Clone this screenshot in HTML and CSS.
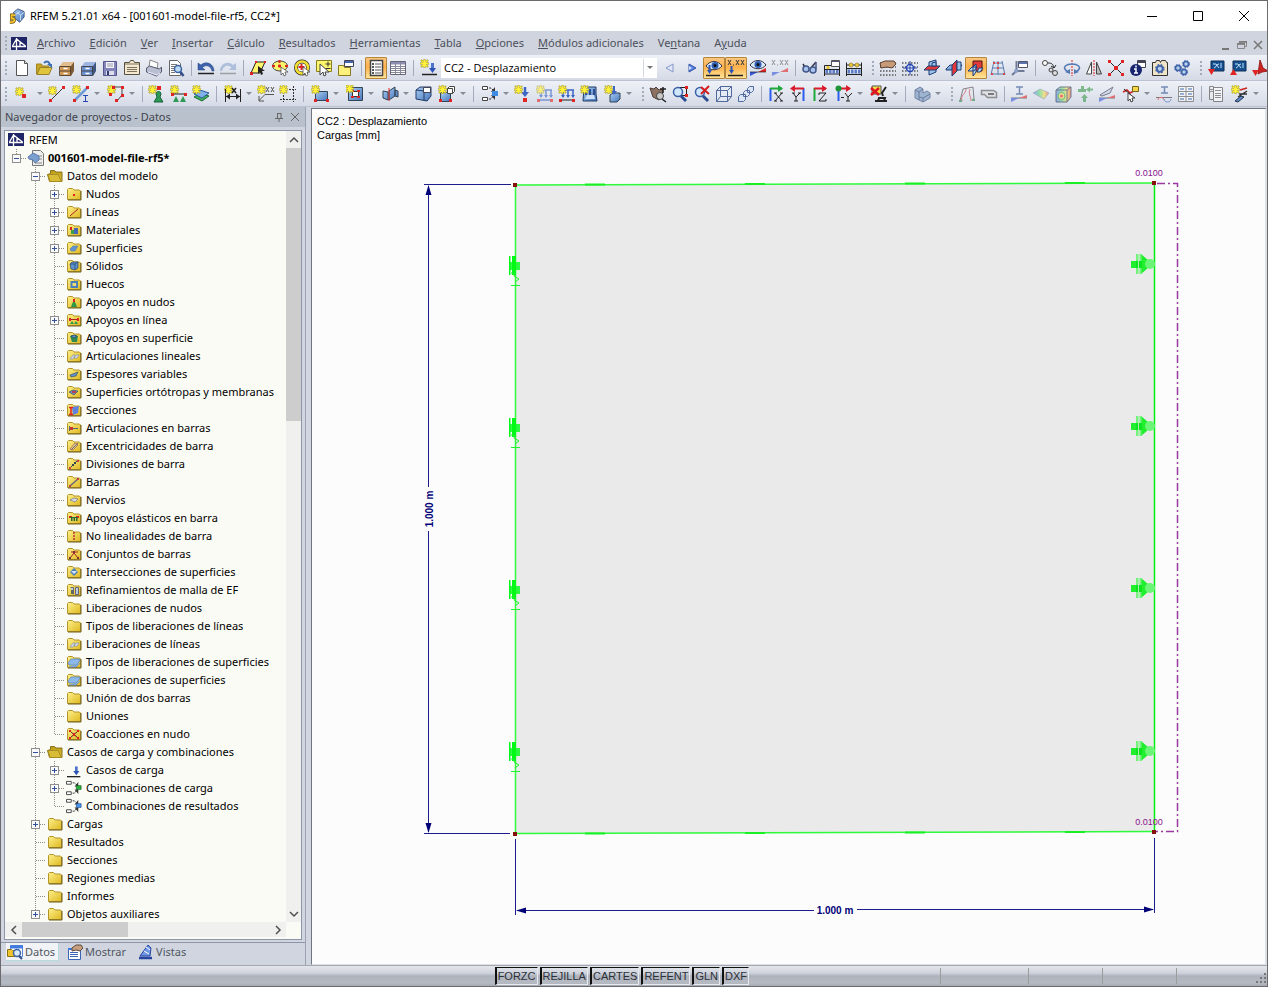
FILE: index.html
```html
<!DOCTYPE html>
<html lang="es">
<head>
<meta charset="utf-8">
<title>RFEM 5.21.01 x64</title>
<link rel="stylesheet" href="styles.css">
</head>
<body>
<svg class="defs" width="0" height="0" aria-hidden="true">
  <defs>
    <linearGradient id="gold" x1="0" y1="0" x2="1" y2="1"><stop offset="0" stop-color="#fdf08a"/><stop offset="1" stop-color="#dfb820"/></linearGradient>
    <linearGradient id="olive" x1="0" y1="0" x2="0" y2="1"><stop offset="0" stop-color="#b89a1c"/><stop offset="1" stop-color="#e2c436"/></linearGradient>
    <linearGradient id="blue" x1="0" y1="0" x2="1" y2="1"><stop offset="0" stop-color="#a9cdf2"/><stop offset="1" stop-color="#4677bd"/></linearGradient>
    <linearGradient id="rainbow" x1="0" y1="0" x2="1" y2="0"><stop offset="0" stop-color="#5a7df0"/><stop offset=".4" stop-color="#5fd87a"/><stop offset=".7" stop-color="#f4e04a"/><stop offset="1" stop-color="#f0533c"/></linearGradient>
    <g id="star"><path d="M4.5 0v9M0 4.5h9M1 1l7 7M8 1l-7 7" stroke="#a89a2c" stroke-width="2" fill="none"/><path d="M4.5 .5v8M.5 4.5h8M1.500 1.500l6 6M7.500 1.500l-6 6" stroke="#fff03a" stroke-width="1.200" fill="none"/></g>
    <g id="logo"><path fill="#1f2466" d="M0 1h16v13H0z"/><path d="M1 10.500h14M5.500 2v12M5.500 3l-4 7M5.500 3l9 7M9 6v4" stroke="#fff" stroke-width="1.300" fill="none"/></g>
    <g id="folder"><path d="M.5 13.500v-10l1-1h4l1.500 1.500h5.500l1 1v8.500z" fill="url(#gold)" stroke="#b3942a"/><path d="M1 14h13V5" fill="none" stroke="#6f5c1a"/></g>
    <g id="open"><path d="M1.500 13.500L-.5 6.500l3-1V2.500h4l1.500 1.500h6v9.500z" fill="url(#olive)" stroke="#8b731a"/><path d="M0 6.500h10l3.500 7H2z" fill="#d9bc35" stroke="#a88d22"/></g>
    <g id="drawers"><path d="M3 7l3-4h11v9l-3 5H3z"/><path d="M3 7l3-4h11l-3 4z" fill="#fff" fill-opacity=".35"/><path d="M14 7l3-4v9l-3 5z" fill="#000" fill-opacity=".4"/><path d="M2.500 7.500h11v9h-11zM3 12h11" stroke="#3c342c" stroke-width=".8" fill="none"/><path d="M6.500 9.500h4M6.500 14.500h4" stroke="#fff" stroke-width="1.500"/></g>
    <g id="plane"><path d="M1 10l4-4h12l-4 5H1z" fill="url(#blue)" stroke="#1d3d74"/></g>
    <g id="glyphgrid"><path d="M1 4h16M1 8h16M1 12h16M1 16h16" stroke="#555" stroke-width="1.500" stroke-dasharray="1.500 1.500" fill="none"/></g>
    <g id="combo"><path d="M1.500 1.500h5v3h-5zM1.500 12.500h5v3h-5z" fill="#fff" stroke="#444"/><path d="M8 3h2l3 3M8 14h2l3-4" stroke="#333" fill="none" stroke-dasharray="2 1"/><path d="M14 2v5h-4zM14 15v-5h-4z" fill="#333"/></g>
    <g id="support"><path d="M4 3a2.500 2.500 0 0 1 5 0L8 6l3 5H2l3-5z" fill="#2f9a55" stroke="#14613a"/></g>
    <g id="load"><path d="M1 16.500h15" stroke="#222" stroke-width="1.500"/><path d="M11.500 5v6" stroke="#4d72cc" stroke-width="3"/><path d="M8 10h7l-3.500 5z" fill="#2d55b8"/></g>
    <g id="gear"><circle cx="4" cy="4" r="2.500" fill="#b7d0ee" stroke="#3d62a8" stroke-width="1.500"/><circle cx="4" cy="4" r="3.500" fill="none" stroke="#3d62a8" stroke-dasharray="1.500 1.300"/></g>
    <g id="bearing-left" fill="#00fa16"><path d="M509 256h1.500v19H509zM512 256h4v19h-4z"/><path d="M510 262h10v8h-10z" opacity=".8"/><path d="M511 273h4l-1 3 5 3-4 3M511 285.500h9" fill="none" stroke="#1ff02c"/></g>
    <g id="bearing-right"><path d="M1131 261h6v7h-6zM1141 254l7 6v8l-7 6z" fill="#22ee30"/><path d="M1136 254h2.500v20h-2.500zM1139.500 254h2v20h-2z" fill="#74f27c"/><circle cx="1150" cy="264" r="5" fill="#6cf576"/><path d="M1136 261h2v7h-2zM1139 261h3v7h-3z" fill="#0ce51c"/></g>
  </defs>
</svg>

<div class="window">
  <header class="titlebar">
    <svg class="ico" viewBox="0 0 18 18"><path d="M5 5l5-4 7 3v6l-5 6-5-4z" fill="url(#blue)" stroke="#3a5078"/><path d="M9 5l4 3v6M13 8l4-3M7 8l5-4" stroke="#dbe7f7" fill="none"/><path d="M7 8H3v4c4-1 4 4 0 4H1" stroke="#6b5210" stroke-width="3.500" fill="none"/><path d="M7 8H3v4c4-1 4 4 0 4H1" stroke="#f3c22a" stroke-width="2" fill="none"/></svg>
    <h1>RFEM 5.21.01 x64 - [001601-model-file-rf5, CC2*]</h1>
    <div class="caption-buttons">
      <button aria-label="Minimizar"><svg viewBox="0 0 12 12"><path d="M1 6.500h10" stroke="#000"/></svg></button>
      <button aria-label="Maximizar"><svg viewBox="0 0 12 12"><path d="M1.500 1.500h9v9h-9z" fill="none" stroke="#000"/></svg></button>
      <button aria-label="Cerrar"><svg viewBox="0 0 12 12"><path d="M1 1l10 10M11 1L1 11" stroke="#000"/></svg></button>
    </div>
  </header>

  <nav class="menubar" aria-label="Menú principal">
    <span class="grip"></span>
    <svg class="brand" viewBox="0 0 16 15"><use href="#logo"/></svg>
    <button><u>A</u>rchivo</button><button><u>E</u>dición</button><button><u>V</u>er</button><button><u>I</u>nsertar</button><button><u>C</u>álculo</button><button><u>R</u>esultados</button><button><u>H</u>erramientas</button><button><u>T</u>abla</button><button><u>O</u>pciones</button><button><u>M</u>ódulos adicionales</button><button>Ve<u>n</u>tana</button><button>A<u>y</u>uda</button>
    <div class="mdi-buttons">
      <button aria-label="Minimizar documento"><svg viewBox="0 0 12 12"><path d="M2 10h7" stroke="#777" stroke-width="2"/></svg></button>
      <button aria-label="Restaurar documento"><svg viewBox="0 0 12 12"><path d="M3.500 4V2.500h7v5H9M1.500 4.500h7v5h-7z" fill="none" stroke="#888"/><path d="M1 5h8M3 3h8" stroke="#777" stroke-width="1.500"/></svg></button>
      <button aria-label="Cerrar documento"><svg viewBox="0 0 12 12"><path d="M2 2l8 8M10 2l-8 8" stroke="#777" stroke-width="1.500"/></svg></button>
    </div>
  </nav>

  <div class="toolbar" role="toolbar" aria-label="Estándar">
    <span class="grip"></span>
    <button class="tool" aria-label="Nuevo"><svg viewBox="0 0 18 18"><path d="M3.500 1.500h8l3 3v12h-11z" fill="#fff" stroke="#555"/><path d="M11.500 1.500v3h3" fill="#ddd" stroke="#555"/></svg></button>
    <button class="tool" aria-label="Abrir"><svg viewBox="0 0 18 18"><path d="M1.500 15V5h5l1 2h6v8z" fill="#c9a526" stroke="#a08622"/><path d="M2 15.500l3-7h12l-3 7z" fill="#e0c43e" stroke="#96802a"/><path d="M9 4c3-3 6-1 6 3" stroke="#3c6eb4" stroke-width="2" fill="none"/><path d="M12 5h5v4z" fill="#3c6eb4"/></svg></button>
    <button class="tool" aria-label="Archivador"><svg viewBox="0 0 18 18"><use href="#drawers" fill="#d39a55"/></svg></button>
    <button class="tool" aria-label="Proyectos"><svg viewBox="0 0 18 18"><use href="#drawers" fill="#6a90d2"/></svg></button>
    <button class="tool" aria-label="Guardar"><svg viewBox="0 0 18 18"><path d="M2.500 2.500h13v14h-13z" fill="#8284ba" stroke="#55578c"/><path d="M5 3h8v6H5z" fill="#f4f4fa"/><path d="M6 5h6M6 7h6" stroke="#99a"/><path d="M5 12h8v4H5z" fill="#dde"/><path d="M6 12h2v4H6z" fill="#333a70"/></svg></button>
    <button class="tool" aria-label="Portapapeles"><svg viewBox="0 0 18 18"><path d="M1.500 3.500h5l1-2h3l1 2h5v12h-15z" fill="#f3e8cf" stroke="#5a5140"/><path d="M2 5h14M4 8.500h10M4 10.500h10M4 12.500h10" stroke="#7c715b"/></svg></button>
    <button class="tool" aria-label="Imprimir"><svg viewBox="0 0 18 18"><path d="M4 8L5 1l8 3-1 6z" fill="#fff" stroke="#888"/><path d="M1.500 9l3-2 10 3 2-2v5l-5 4-10-4z" fill="#b9bfd0" stroke="#545a70"/><path d="M3 13l9 3 3-2" stroke="#eef" fill="none"/></svg></button>
    <button class="tool" aria-label="Vista preliminar"><svg viewBox="0 0 18 18"><path d="M2.500 1.500h8l3 3v12h-11z" fill="#fff" stroke="#666"/><path d="M4 5.500h6M4 7.500h4M4 9.500h3M4 11.500h3M4 13.500h4" stroke="#777"/><circle cx="11" cy="10" r="3.500" fill="#bcdcf6" stroke="#3c62a0" stroke-width="1.500"/><path d="M13.500 13l3 4" stroke="#334f88" stroke-width="2.500"/></svg></button>
    <span class="sep"></span>
    <button class="tool" aria-label="Deshacer"><svg viewBox="0 0 18 18"><path d="M1 4v7h7L5.500 8.500C9 5 14 7 15 12h2C17 5 9 1 4 6z" fill="#3d63ae" stroke="#27437e" stroke-width=".5"/><path d="M1 14.500h16" stroke="#222" stroke-width="1.500"/></svg></button>
    <button class="tool dim" aria-label="Rehacer"><svg viewBox="0 0 18 18"><path d="M17 4v7h-7l2.500-2.500C9 5 4 7 3 12H1C1 5 9 1 14 6z" fill="#8ba4cf"/><path d="M1 14.500h16" stroke="#777" stroke-width="1.500"/></svg></button>
    <span class="sep"></span>
    <button class="tool" aria-label="Selección por paralelogramo"><svg viewBox="0 0 18 18"><path d="M2 14L7 3h9l-5 11z" fill="#fdf56b" stroke="#222"/><path d="M1 13h3v3H1zM6 2h2v2H6zM15 2h2v2h-2z" fill="#d22"/><path d="M9 7v8l2-2 1 3 2-1-1-3h3z" fill="#222"/></svg></button>
    <button class="tool" aria-label="Selección por elipse"><svg viewBox="0 0 18 18"><ellipse cx="9" cy="7" rx="7.500" ry="5" fill="#fdf56b" stroke="#444"/><path d="M8.500 1v3M1 7h3M7 7h3M8.500 5.500v3M14 7h3" stroke="#d22" stroke-width="2"/><path d="M10 8v8l2-2 1 3 2-1-1-3h3z" fill="#fff" stroke="#444" stroke-width=".7"/></svg></button>
    <button class="tool" aria-label="Selección circular"><svg viewBox="0 0 18 18"><circle cx="9" cy="8.500" r="6" fill="#fff" stroke="#333" stroke-width="4"/><circle cx="9" cy="8.500" r="6" fill="none" stroke="#f5e030" stroke-width="2.500"/><path d="M8.500 5v6M5.500 8h6" stroke="#d22" stroke-width="2"/><path d="M10 8v8l2-2 1 3 2-1-1-3h3z" fill="#fff" stroke="#444" stroke-width=".7"/></svg></button>
    <button class="tool" aria-label="Selección aditiva"><svg viewBox="0 0 18 18"><path d="M1.500 1.500h15v11h-15z" fill="#fdf56b" stroke="#8a8020"/><path d="M10.500 5h5M13 2.500v5M10.500 9.500h5" stroke="#333"/><path d="M5 5v11l3-3 1 4 2-1-1-3h4z" fill="#fff" stroke="#444"/></svg></button>
    <button class="tool" aria-label="Nueva selección"><svg viewBox="0 0 18 18"><path d="M1.500 6.500h5l1 2h6v8h-12z" fill="#fdf07b" stroke="#8a7a20"/><path d="M7.500 1.500h9v6h-9z" fill="#fff" stroke="#445"/><path d="M8 3h8" stroke="#4668b0" stroke-width="2"/></svg></button>
    <span class="sep"></span>
    <button class="tool on" aria-label="Navegador" aria-pressed="true"><svg viewBox="0 0 18 18"><path d="M3.500 1.500h12v15h-12z" fill="#fff" stroke="#444" stroke-width="1.500"/><path d="M5 5h2M5 8h2M5 11h2M5 14h2" stroke="#222" stroke-width="1.500"/><path d="M8 5h6M8 8h6M8 11h6M8 14h6" stroke="#555"/></svg></button>
    <button class="tool" aria-label="Tablas"><svg viewBox="0 0 18 18"><path d="M1.500 2.500h15v13h-15z" fill="#fff" stroke="#667"/><path d="M2 3h14v2.500H2z" fill="#8e90b8"/><path d="M2 7.500h14M2 9.500h14M2 11.500h14M2 13.500h14M6.500 3v12M11.500 3v12" stroke="#889"/></svg></button>
    <span class="sep"></span>
    <button class="tool" aria-label="Nuevo caso de carga"><svg viewBox="0 0 18 18"><use href="#star" x="1"/><use href="#load" x="2" y="-1"/></svg></button>
    <div class="combo"><select aria-label="Caso de carga"><option>CC2 - Desplazamiento</option></select><svg viewBox="0 0 14 18"><path d="M.5 0v18" stroke="#d4d8e0"/><path d="M4 7h6l-3 3z" fill="#777"/></svg></div>
    <button class="tool" aria-label="Anterior"><svg viewBox="0 0 18 18"><path d="M12 5v8L5 9z" fill="#dfe6f8" stroke="#8798c8"/></svg></button>
    <button class="tool" aria-label="Siguiente"><svg viewBox="0 0 18 18"><path d="M6 5v8l7-4z" fill="#5a82e0" stroke="#3355a8"/><path d="M6 7v4l3-2z" fill="#cfe0fb"/></svg></button>
    <button class="tool on" aria-label="Mostrar cargas"><svg viewBox="0 0 18 18"><path d="M1 16.500h14" stroke="#222" stroke-width="1.500"/><path d="M1 7c4-6 12-6 16 0-4 5-12 5-16 0z" fill="#dce9f8" stroke="#334"/><circle cx="10" cy="6.500" r="3.500" fill="#2f5fb4"/><circle cx="10" cy="6.500" r="1.500" fill="#111"/><path d="M4.500 6v6" stroke="#2d55b8" stroke-width="2"/><path d="M2 11h5l-2.500 4z" fill="#2d55b8"/></svg></button>
    <button class="tool on" aria-label="Mostrar valores de carga"><svg viewBox="0 0 18 18"><path d="M1 16.500h15" stroke="#222" stroke-width="1.500"/><path d="M1 1l3 5M4 1L1 6M9 1l3 5M12 1L9 6M14 1l3 5M17 1l-3 5M6 6h1" stroke="#333"/><path d="M4.500 7v5" stroke="#2d55b8" stroke-width="2"/><path d="M2 11h5l-2.500 4z" fill="#2d55b8"/></svg></button>
    <button class="tool" aria-label="Mostrar resultados"><svg viewBox="0 0 18 18"><path d="M1 6c4-6 12-6 16 0-4 5-12 5-16 0z" fill="#dce9f8" stroke="#334"/><circle cx="9" cy="5.500" r="3.500" fill="#2f5fb4"/><circle cx="9" cy="5.500" r="1.500" fill="#111"/><path d="M1 17l8-4H1z" fill="#3858d8"/><path d="M9 13l8-4v4z" fill="#e02424"/><path d="M1 13h16" stroke="#222" stroke-width=".7"/></svg></button>
    <button class="tool dim" aria-label="Mostrar valores de resultados"><svg viewBox="0 0 18 18"><path d="M1 1l3 5M4 1L1 6M9 1l3 5M12 1L9 6M14 1l3 5M17 1l-3 5M6 6h1" stroke="#555"/><path d="M1 17l8-4H1z" fill="#3858d8"/><path d="M9 13l8-4v4z" fill="#e02424"/></svg></button>
    <span class="sep"></span>
    <button class="tool" aria-label="Filtro visual"><svg viewBox="0 0 18 18"><path d="M2 5l3 5M9 10l6-7" stroke="#334" stroke-width="1.500"/><circle cx="5" cy="10" r="3" fill="#a8c4ee" stroke="#44588a" stroke-width="1.500"/><circle cx="12" cy="11" r="3" fill="#a8c4ee" stroke="#44588a" stroke-width="1.500"/><path d="M15 3v7" stroke="#44588a" stroke-width="1.500"/></svg></button>
    <button class="tool" aria-label="Parámetros de cálculo"><svg viewBox="0 0 18 18"><path d="M1.500 17V6.500h15V17M1 10.500h16M1 15h16" stroke="#222" fill="none"/><circle cx="5" cy="8.500" r="1.800" fill="#e8c83c"/><path d="M2.500 12.800h13" stroke="#5b7cc8" stroke-width="3.500" stroke-dasharray="2.500 1"/><path d="M8.500 1.500h8v6h-8z" fill="#fff" stroke="#555"/><path d="M9 2.500h7" stroke="#557"/></svg></button>
    <button class="tool" aria-label="Calcular"><svg viewBox="0 0 18 18"><path d="M1.500 17V3.500M16.500 3.500V17M1 9.500h16M1 6h16M1 15.500h16" stroke="#222" fill="none"/><circle cx="6" cy="6" r="2" fill="#e8c83c" stroke="#86701c" stroke-width=".6"/><circle cx="12" cy="6" r="2" fill="#e8c83c" stroke="#86701c" stroke-width=".6"/><path d="M2.500 12.500h13" stroke="#5b7cc8" stroke-width="4" stroke-dasharray="2.500 1"/></svg></button>
    <span class="grip"></span>
    <button class="tool" aria-label="Rejilla de trabajo"><svg viewBox="0 0 18 18"><use href="#glyphgrid"/><path d="M1 4l5-2h9l2 3-4 4-5-1-6 1z" fill="#c79a78" stroke="#5b4030"/></svg></button>
    <button class="tool" aria-label="Origen de rejilla"><svg viewBox="0 0 18 18"><use href="#glyphgrid"/><circle cx="9" cy="9" r="3.500" fill="#e8eefb" stroke="#2547b0" stroke-width="1.500"/><path d="M9 2v14M2 9h14" stroke="#2547b0"/></svg></button>
    <button class="tool" aria-label="Plano XY"><svg viewBox="0 0 18 18"><path d="M6 3l7-2v12l-7 3z" fill="#9cc4ea" stroke="#1d3d74"/><path d="M1 11l4-4h12l-4 4z" fill="#e23a3a" stroke="#1d3d74"/><path d="M9 4l4-1v4H9z" fill="#9cc4ea" stroke="#1d3d74"/></svg></button>
    <button class="tool" aria-label="Plano YZ"><svg viewBox="0 0 18 18"><use href="#plane"/><path d="M7 6l5-5v11l-5 5z" fill="#e23a3a" stroke="#1d3d74"/><path d="M12 3h4v8h-4z" fill="#9cc4ea" stroke="#1d3d74"/></svg></button>
    <button class="tool on" aria-label="Plano XZ"><svg viewBox="0 0 18 18"><path d="M6 2h9v10H6z" fill="#e23a3a" stroke="#4a1414"/><path d="M1 12l4-4h5l-3 4zM6 8l3-3v8l-3 4zM12 9h4l-3 4h-3z" stroke="#1d3d74" fill="#bcd9f4"/></svg></button>
    <button class="tool" aria-label="Ejes de trabajo"><svg viewBox="0 0 18 18"><path d="M5 2L2 16M9 2v14M13 2l3 14M4 4h10M3 9h12M2 15h14" stroke="#5a7fae" fill="none"/><path d="M4 3h2v2H4zM8 8h2v2H8zM14 14h2v2h-2zM8 3h2v2H8zM2 14h2v2H2z" fill="#d8484f"/></svg></button>
    <button class="tool" aria-label="Sistema de coordenadas"><svg viewBox="0 0 18 18"><path d="M5.500 2v10h8M5.500 12L1 16" stroke="#6d7a98" stroke-width="2" fill="none"/><path d="M7.500 2.500h9v6h-9z" fill="#fff" stroke="#556"/><path d="M8 4h8" stroke="#5b74b0" stroke-width="2"/><circle cx="5" cy="12" r="2" fill="#8da2c8"/></svg></button>
    <span class="sep"></span>
    <button class="tool" aria-label="Mover o copiar"><svg viewBox="0 0 18 18"><circle cx="4" cy="4" r="2.500" fill="#fff" stroke="#444"/><circle cx="14" cy="14" r="2.500" fill="#ddd" stroke="#444"/><circle cx="10" cy="11" r="2" fill="#ddd" stroke="#444"/><path d="M7 4c4 0 5 1 6 5M13 9l-3-2M13 9l2-3" stroke="#222" fill="none"/></svg></button>
    <button class="tool" aria-label="Girar"><svg viewBox="0 0 18 18"><path d="M9 1v16" stroke="#d22" stroke-dasharray="2 1"/><path d="M4 12c-6-4 0-7 5-7s11 3 5 7" stroke="#5478b4" stroke-width="1.500" fill="none"/><path d="M2 13l5-3v5zM16 13l-5-3v5z" fill="#5478b4"/></svg></button>
    <button class="tool" aria-label="Simetría"><svg viewBox="0 0 18 18"><path d="M6.500 3v12h-5z" fill="#fff" stroke="#444"/><path d="M11.500 3v12h5z" fill="#bbb" stroke="#444"/><path d="M9 1v16" stroke="#d22" stroke-dasharray="2 1"/></svg></button>
    <button class="tool" aria-label="Dividir"><svg viewBox="0 0 18 18"><path d="M2 2l14 14M16 2L2 16" stroke="#222"/><path d="M1 1h3v3H1zM14 1h3v3h-3zM1 14h3v3H1zM14 14h3v3h-3zM7 7h4v4H7z" fill="#e02424"/></svg></button>
    <button class="tool" aria-label="Información"><svg viewBox="0 0 18 18"><path d="M8.500 1.500h8v7h-8z" fill="#fff" stroke="#445"/><path d="M9 3h7" stroke="#445" stroke-width="2"/><circle cx="7" cy="11" r="6" fill="#17256f"/><path d="M7 6.500v2M5 10h2v4M5 14h4" stroke="#fff" stroke-width="1.500" fill="none"/></svg></button>
    <button class="tool" aria-label="Opciones de visualización"><svg viewBox="0 0 18 18"><path d="M1.500 3.500h3l1-2h3l1 2 1-2h4l1 2h1v13h-15z" fill="#efe3c8" stroke="#333"/><g transform="translate(4 5) scale(1.200)"><use href="#gear"/></g></svg></button>
    <button class="tool" aria-label="Configuración"><svg viewBox="0 0 18 18"><use href="#gear" x="1" y="5"/><use href="#gear" x="9" y="1"/><use href="#gear" x="7" y="9"/></svg></button>
    <span class="grip"></span>
    <button class="tool" aria-label="Importar"><svg viewBox="0 0 18 18"><path d="M4 2h13v10H4z" fill="#17508f" stroke="#0d2c56"/><path d="M6 5h3l3 4M12 5c-3 0-3 4-5 4M14 4v5" stroke="#bfe0fa" fill="none"/><path d="M1 10h7l-3.500 6z" fill="#e02424"/></svg></button>
    <button class="tool" aria-label="Exportar"><svg viewBox="0 0 18 18"><path d="M4 2h13v10H4z" fill="#17508f" stroke="#0d2c56"/><path d="M6 5h3l3 4M12 5c-3 0-3 4-5 4M14 4v5" stroke="#bfe0fa" fill="none"/><path d="M1 16h7l-3.500-6z" fill="#e02424"/></svg></button>
    <button class="tool" aria-label="PDF"><svg viewBox="0 0 18 18"><path d="M9 1l3 8 5 3-6 1-4 2z" fill="#c22" stroke="#922"/><path d="M1 11h7l-3.500 6z" fill="#e02424"/></svg></button>
  </div>

  <div class="toolbar" role="toolbar" aria-label="Insertar">
    <span class="grip"></span>
    <div class="split"><button aria-label="Nuevo nudo"><svg viewBox="0 0 18 18"><use href="#star" y="2"/><path d="M7 9h4v4H7z" fill="#e02424"/></svg></button><button class="more" aria-label="Más nudos"></button></div>
    <button class="tool" aria-label="Nueva línea"><svg viewBox="0 0 18 18"><use href="#star" y="1"/><path d="M3 15L15 3" stroke="#333"/><path d="M1 14h3v3H1zM14 1h3v3h-3z" fill="#e02424"/></svg></button>
    <div class="split"><button aria-label="Nueva barra"><svg viewBox="0 0 18 18"><use href="#star"/><path d="M3 15L15 3" stroke="#6f9ad8" stroke-width="2.500"/><path d="M1 14h3v3H1zM14 1h3v3h-3z" fill="#e02424"/><path d="M11 10.500h5M11 16.500h5M13.500 10v6" stroke="#2547b0"/></svg></button><button class="more" aria-label="Más barras"></button></div>
    <div class="split"><button aria-label="Nueva polilínea"><svg viewBox="0 0 18 18"><use href="#star"/><path d="M6 2h9v8l-5 6" stroke="#444" fill="none"/><path d="M5 1h3v3H5zM14 1h3v3h-3zM14 9h3v3h-3zM8 14h3v3H8zM2 8h3v3H2z" fill="#e02424"/></svg></button><button class="more" aria-label="Más polilíneas"></button></div>
    <span class="sep"></span>
    <button class="tool" aria-label="Apoyo en nudo"><svg viewBox="0 0 18 18"><use href="#support" x="4" y="6"/><use href="#star"/><path d="M9 1h4v4H9z" fill="#e02424"/></svg></button>
    <button class="tool" aria-label="Apoyo en línea"><svg viewBox="0 0 18 18"><use href="#star"/><path d="M3 9h13" stroke="#222"/><path d="M1 8h3v3H1zM14 8h3v3h-3z" fill="#e02424"/><path d="M3 17l3-6 3 6zM10 17l3-6 3 6z" fill="#2f9a55"/></svg></button>
    <button class="tool" aria-label="Apoyo en superficie"><svg viewBox="0 0 18 18"><path d="M2 12l6-4 9 3-7 5z" fill="#3fae5c" stroke="#1b6e37"/><path d="M2 9l6-4 9 3-7 5z" fill="#7fb2ea" stroke="#2d5a9c"/><use href="#star"/></svg></button>
    <span class="sep"></span>
    <div class="split"><button aria-label="Acotación"><svg viewBox="0 0 18 18"><use href="#star"/><path d="M1.500 4v13M16.500 4v13M2 11.500h14" stroke="#222"/><path d="M2 11.500l4-3v6zM16 11.500l-4-3v6z" fill="#222"/><path d="M8 3l4 5M12 3L8 8" stroke="#222" stroke-width="1.500"/></svg></button><button class="more" aria-label="Más acotaciones"></button></div>
    <button class="tool" aria-label="Comentario"><svg viewBox="0 0 18 18"><use href="#star"/><path d="M9 2l3 5M12 2L9 7M14 2l3 5M17 2l-3 5M17 9.500H8l-6 6M2 11v5h5" stroke="#555" fill="none"/></svg></button>
    <button class="tool" aria-label="Línea auxiliar"><svg viewBox="0 0 18 18"><path d="M4.500 1v16M14.500 1v16M1 4.500h16M1 14.500h16" stroke="#333" stroke-dasharray="2 1"/><use href="#star"/></svg></button>
    <span class="sep"></span>
    <div class="split"><button aria-label="Nueva superficie"><svg viewBox="0 0 18 18"><path d="M4.500 6.500h12v9h-12z" fill="url(#blue)" stroke="#345"/><use href="#star"/><path d="M3 14h3v3H3zM15 14h3v3h-3z" fill="#e02424"/></svg></button><button class="more" aria-label="Más superficies"></button></div>
    <div class="split"><button aria-label="Abertura"><svg viewBox="0 0 18 18"><path d="M2.500 2.500h14v13h-14z" fill="url(#blue)" stroke="#345"/><path d="M6.500 6.500h6v5h-6z" fill="#fff" stroke="#333"/><path d="M5 5h3v2H5zM11 5h3v2h-3zM5 11h3v2H5zM11 11h3v2h-3z" fill="#e02424"/><use href="#star" x="-1" y="-1"/></svg></button><button class="more" aria-label="Más aberturas"></button></div>
    <div class="split"><button aria-label="Intersección"><svg viewBox="0 0 18 18"><path d="M2 6l5 1v8l-5-2zM8 6l6-4v9l-6 4zM14 5l3 1v6l-3-1z" fill="url(#blue)" stroke="#345"/><path d="M8 3v13" stroke="#e02424"/></svg></button><button class="more" aria-label="Más intersecciones"></button></div>
    <button class="tool" aria-label="Nuevo sólido"><svg viewBox="0 0 18 18"><path d="M2 5l4-3h11v9l-4 5-11-2z" fill="url(#blue)" stroke="#223a66"/><path d="M2 5l8 1 7-4M10 6v9" stroke="#223a66" fill="none"/><path d="M9.500 2.500h7v5h-7z" fill="#fff" stroke="#445"/></svg></button>
    <div class="split"><button aria-label="Extruir"><svg viewBox="0 0 18 18"><path d="M2.500 7.500h10v9h-10z" fill="url(#blue)" stroke="#345"/><path d="M9.500 3.500l2-2h5v5l-2 2M9.500 3.500h5v5h-5z" fill="#fff" stroke="#444"/><use href="#star"/><path d="M1 14h3v3H1zM11 14h3v3h-3z" fill="#e02424"/></svg></button><button class="more" aria-label="Más extrusiones"></button></div>
    <span class="sep"></span>
    <div class="split"><button aria-label="Combinación"><svg viewBox="0 0 18 18"><use href="#combo"/><path d="M11 6h6v5h-6z" fill="#3f8ce4"/></svg></button><button class="more" aria-label="Más combinaciones"></button></div>
    <button class="tool" aria-label="Carga en nudo"><svg viewBox="0 0 18 18"><path d="M11 2v6" stroke="#3c66c4" stroke-width="2.500"/><path d="M7 7h8l-4 5z" fill="#3c66c4"/><use href="#star"/><path d="M9 13h4v4H9z" fill="#e02424"/></svg></button>
    <button class="tool dim" aria-label="Carga en barra"><svg viewBox="0 0 18 18"><path d="M3 5h13M5 5v7M10 5v7M15 5v7M2 15h14" stroke="#3c66c4" stroke-width="1.500"/><path d="M3 10h4l-2 3zM8 10h4l-2 3zM13 10h4l-2 3z" fill="#3c66c4"/><use href="#star"/><path d="M1 14h3v3H1zM14 14h3v3h-3z" fill="#e02424"/></svg></button>
    <button class="tool" aria-label="Carga en línea"><svg viewBox="0 0 18 18"><path d="M3 5h13M5 5v7M10 5v7M15 5v7" stroke="#3c66c4" stroke-width="1.500"/><path d="M3 10h4l-2 3zM8 10h4l-2 3zM13 10h4l-2 3z" fill="#3c66c4"/><path d="M2 15h14" stroke="#222"/><use href="#star"/><path d="M1 14h3v3H1zM14 14h3v3h-3z" fill="#e02424"/></svg></button>
    <button class="tool" aria-label="Carga en superficie"><svg viewBox="0 0 18 18"><path d="M4 2h12v7l1 7H3z" fill="url(#blue)" stroke="#223a66"/><path d="M6 4v6M10 4v6M14 4v6" stroke="#17337a" stroke-width="1.500"/><path d="M5 14l2-4h7l1 4z" fill="#cfe2f8"/><use href="#star"/></svg></button>
    <div class="split"><button aria-label="Carga en sólido"><svg viewBox="0 0 18 18"><path d="M6 10l3-2h7v6l-3 3H6z" fill="url(#blue)" stroke="#345"/><path d="M10 1v5" stroke="#3c66c4" stroke-width="2"/><path d="M7 6h6l-3 4z" fill="#3c66c4"/><use href="#star"/></svg></button><button class="more" aria-label="Más cargas"></button></div>
    <span class="grip"></span>
    <button class="tool" aria-label="Mover vista"><svg viewBox="0 0 18 18"><path d="M1 3l4 1 2-2 3 3 4-1-1 7-3 4-6-3z" fill="#8b7262" stroke="#4c3f38"/><circle cx="11" cy="11" r="3.500" fill="#c9c9c9" stroke="#444"/><path d="M14 2v6M11 4h6M13 14l4 3" stroke="#222" stroke-width="1.500"/></svg></button>
    <button class="tool" aria-label="Ampliar ventana"><svg viewBox="0 0 18 18"><path d="M6.500 2.500h9v8h-9z" fill="none" stroke="#222"/><circle cx="7" cy="7" r="4.500" fill="#cfe6fb" stroke="#3a5ea4" stroke-width="1.500"/><path d="M10 11l5 5" stroke="#2b4a90" stroke-width="3"/><path d="M14 1h3v3h-3zM14 9h3v3h-3z" fill="#e02424"/></svg></button>
    <button class="tool" aria-label="Mostrar todo"><svg viewBox="0 0 18 18"><circle cx="7" cy="7" r="4.500" fill="#cfe6fb" stroke="#3a5ea4" stroke-width="1.500"/><path d="M10 11l5 5" stroke="#2b4a90" stroke-width="3"/><path d="M8 2l8 7M16 1L8 9" stroke="#d81c1c" stroke-width="2"/></svg></button>
    <button class="tool" aria-label="Isometría"><svg viewBox="0 0 18 18"><path d="M1.500 5.500l4-4h11v10l-4 5h-11zM1.500 5.500h11l4-4M12.500 5.500v11M5.500 1.500v10l-4 5M5.500 11.500h11" fill="#e5eefa" fill-opacity=".5" stroke="#51699c"/></svg></button>
    <button class="tool" aria-label="Vista transparente"><svg viewBox="0 0 18 18"><path d="M10.500 3.500l2-2h4v4l-2 2h-4zM6.500 7.500l2-2h4v4l-2 2h-4zM1.500 11.500l2-2h5v5l-2 2h-5z" fill="#dce5f5" stroke="#51699c"/></svg></button>
    <span class="sep"></span>
    <button class="tool" aria-label="Vista X"><svg viewBox="0 0 18 18"><path d="M3.500 3v13" stroke="#2a5cf0" stroke-width="2"/><path d="M3 3.500h12" stroke="#1fa83c" stroke-width="2"/><path d="M11 0l5 3.500L11 7z" fill="#1fa83c"/><path d="M8 8l7 8M15 8l-7 8M7 8h3M13 8h3M7 16h3M13 16h3" stroke="#222"/></svg></button>
    <button class="tool" aria-label="Vista Y"><svg viewBox="0 0 18 18"><path d="M14.500 3v13" stroke="#2a5cf0" stroke-width="2"/><path d="M3 3.500h12" stroke="#d81c2c" stroke-width="2"/><path d="M6 0L1 3.500 6 7z" fill="#d81c2c"/><path d="M4 8l3 4 4-4M7 12v4M5 16h4M3 8h3M9 8h3" stroke="#222" fill="none"/></svg></button>
    <button class="tool" aria-label="Vista Z"><svg viewBox="0 0 18 18"><path d="M3.500 3v13" stroke="#1fa83c" stroke-width="2"/><path d="M3 3.500h12" stroke="#d81c2c" stroke-width="2"/><path d="M11 0l5 3.500L11 7z" fill="#d81c2c"/><path d="M8 10V8h7l-7 8h7v-2" stroke="#222" fill="none"/></svg></button>
    <div class="split"><button aria-label="Vista -Y"><svg viewBox="0 0 18 18"><path d="M3.500 3v13" stroke="#2a5cf0" stroke-width="2"/><path d="M3 3.500h12" stroke="#d81c2c" stroke-width="2"/><path d="M11 0l5 3.500L11 7z" fill="#d81c2c"/><circle cx="3.500" cy="3.500" r="3" fill="#1f9438"/><path d="M6 12.500h3M10 8l3 4 4-4M13 12v4M11 16h4" stroke="#222" fill="none"/></svg></button><button class="more" aria-label="Más vistas"></button></div>
    <div class="split"><button aria-label="Borrar visibilidad"><svg viewBox="0 0 18 18"><path d="M2 1h9v8H2z" fill="#f2e24a" stroke="#555"/><path d="M16 2l-4 6 1 3M5 16h12M9 13h6l-1 3H8z" stroke="#222" stroke-width="2" fill="none"/><path d="M1 3l8 7M9 3l-8 7" stroke="#e0141e" stroke-width="2.500"/></svg></button><button class="more" aria-label="Más visibilidad"></button></div>
    <span class="sep"></span>
    <div class="split"><button aria-label="Visibilidad"><svg viewBox="0 0 18 18"><path d="M2 5l5-3 3 2v4l4-2 3 2v5l-7 4-8-4z" fill="#9fb4d0" stroke="#7486a4"/><path d="M2 5l4 2v8M6 7l4-3M6 12l4 1 7-4M10 13v4" stroke="#6b7e9e" fill="none"/></svg></button><button class="more" aria-label="Más planos"></button></div>
    <span class="grip"></span>
    <button class="tool dim" aria-label="Deformada"><svg viewBox="0 0 18 18"><path d="M2 16L5 4l10-2 1 13" stroke="#444" fill="none"/><path d="M4 16c-2-6 4-7 4-12M12 4c-2 5 1 7 1 12" stroke="#c33" fill="none"/><path d="M1 15h3v2H1zM14 14h3v2h-3z" fill="#2b8a42"/></svg></button>
    <button class="tool dim" aria-label="Panel"><svg viewBox="0 0 18 18"><path d="M1.500 5.500h12l3 2v5h-9l-3-3h-3z" fill="#ddd" stroke="#555" stroke-width="1.500"/><path d="M8 9h6" stroke="#333" stroke-width="2"/></svg></button>
    <span class="sep"></span>
    <button class="tool dim" aria-label="Esfuerzos en barra"><svg viewBox="0 0 18 18"><path d="M6 2h7M6 9h7M9.500 2v7" stroke="#2c4f90" stroke-width="1.500"/><path d="M1 13h16" stroke="#333"/><path d="M1 17l8-4H1z" fill="#3858d8"/><path d="M9 13l8-3v3z" fill="#e02424"/></svg></button>
    <button class="tool dim" aria-label="Esfuerzos en superficie"><svg viewBox="0 0 18 18"><path d="M1 8l7-4 9 4-5 6z" fill="url(#rainbow)" stroke="#789" stroke-width=".7"/></svg></button>
    <button class="tool dim" aria-label="Tensiones en sólido"><svg viewBox="0 0 18 18"><path d="M2 5l4-3h11v10l-4 5H2z" fill="url(#rainbow)" stroke="#234"/><path d="M2 5h11v12M13 5l4-3" stroke="#234" fill="none"/><circle cx="7.500" cy="11" r="3.500" fill="#f4e04a" stroke="#2d9c48"/><circle cx="7.500" cy="11" r="1.500" fill="#e02424"/></svg></button>
    <button class="tool dim" aria-label="Reacciones"><svg viewBox="0 0 18 18"><path d="M7 17v-4H5l3.500-4 3.500 4h-2v4zM17 5.500h-3v2l-4-3 4-3v2h3zM5 1h3v3h2v3H2V4h3z" fill="#3a9a4c"/></svg></button>
    <button class="tool dim" aria-label="Secciones"><svg viewBox="0 0 18 18"><path d="M2 10l13-8-3 6-8 3z" fill="#c7d6ee" stroke="#334"/><path d="M1 13h16" stroke="#333"/><path d="M1 17l8-4H1z" fill="#3858d8"/><path d="M9 13l8-3v3z" fill="#e02424"/></svg></button>
    <div class="split"><button aria-label="Valores"><svg viewBox="0 0 18 18"><path d="M1 7l4-2 3 3 4-2" stroke="#c22" stroke-width="1.500" fill="none"/><path d="M2 4l7 6" stroke="#222"/><path d="M10.500 1.500h6v5h-6z" fill="#f2d548" stroke="#776618"/><path d="M6 8v8l2-2 1 3 2-1-1-3h3z" fill="#fff" stroke="#444"/></svg></button><button class="more" aria-label="Más valores"></button></div>
    <button class="tool dim" aria-label="Diagramas"><svg viewBox="0 0 18 18"><path d="M6 2h7M6 8h7M9.500 2v6" stroke="#2c4f90" stroke-width="1.500"/><path d="M1 12.500h16" stroke="#333"/><path d="M3 15c0-4 6-3 6 0" stroke="#d22" fill="none"/><path d="M9 14c0 4 7 4 7 0" stroke="#36c" fill="none"/></svg></button>
    <button class="tool dim" aria-label="Tablas de resultados"><svg viewBox="0 0 18 18"><path d="M1.500 1.500h15v15h-15zM9 1v16M2 6.500h14M2 11.500h14" fill="#fff" stroke="#555"/><path d="M3 4h4M11 4h4M3 9h4M11 9h4M3 14h4M11 14h4" stroke="#36a" stroke-width="1.500"/></svg></button>
    <span class="sep"></span>
    <button class="tool dim" aria-label="Informe"><svg viewBox="0 0 18 18"><path d="M6.500 2.500h9v14h-9z" fill="#fff" stroke="#444"/><path d="M2.500 1.500h4v13h-4z" fill="#eee" stroke="#444"/><path d="M3 4.500h3M3 6.500h3M8 5.500h6M8 8.500h6M8 10.500h6M8 12.500h6" stroke="#555"/></svg></button>
    <div class="split"><button aria-label="Nueva sección de corte"><svg viewBox="0 0 18 18"><path d="M7 12l9-6M8 9h8" stroke="#333" stroke-width="1.500"/><path d="M4 16l6-5 3 1-6 5z" fill="#5b8ad0" stroke="#234"/><use href="#star"/><path d="M9 5l7-2" stroke="#c22" stroke-width="1.500"/></svg></button><button class="more" aria-label="Más cortes"></button></div>
  </div>

  <main class="workspace">
    <aside class="navigator">
      <div class="nav-title"><h2>Navegador de proyectos - Datos</h2>
        <button aria-label="Fijar"><svg viewBox="0 0 12 12"><path d="M4.500 2v5M8 2v5M4 2.500h4M2 7.500h8M6 8v3" stroke="#666" fill="none"/></svg></button>
        <button aria-label="Cerrar panel"><svg viewBox="0 0 12 12"><path d="M2 2l8 8M10 2l-8 8" stroke="#666"/></svg></button>
      </div>
      <div class="nav-frame">
        <div class="tree">
          <div class="root"><svg viewBox="0 0 16 16"><use href="#logo"/></svg>RFEM</div>
          <ul class="kids">
            <li><div class="row project"><span class="twig"><button class="minus" aria-label="Contraer"></button></span><svg viewBox="0 0 16 16"><path d="M3.500.5h8l3 3v12h-11z" fill="#eee" stroke="#777"/><path d="M10 6h3M10 9h3M6 13h7" stroke="#888"/><path d="M-1 7l5-4 6 3v4l-4 3-2-3-4-1z" fill="#7ba0cf" stroke="#5a7aa6"/></svg>001601-model-file-rf5*</div>
              <ul class="kids">
                <li><div class="row"><span class="twig"><button class="minus" aria-label="Contraer"></button></span><svg viewBox="0 0 16 16"><use href="#open"/></svg>Datos del modelo</div>
                  <ul class="kids">
                    <li><div class="row"><span class="twig"><button aria-label="Expandir"></button></span><svg viewBox="0 0 16 16"><use href="#folder"/><path d="M6 8h2v2H6z" fill="#d22"/></svg>Nudos</div></li>
                    <li><div class="row"><span class="twig"><button aria-label="Expandir"></button></span><svg viewBox="0 0 16 16"><use href="#folder"/><path d="M3 12l8-7" stroke="#a22"/></svg>Líneas</div></li>
                    <li><div class="row"><span class="twig"><button aria-label="Expandir"></button></span><svg viewBox="0 0 16 16"><use href="#folder"/><path d="M3 5h2v3H3z" fill="#d22"/><path d="M4 8h3v4H4z" fill="#3aa04c"/><path d="M7 6h4v6H7z" fill="#4565b8"/></svg>Materiales</div></li>
                    <li><div class="row"><span class="twig"><button aria-label="Expandir"></button></span><svg viewBox="0 0 16 16"><use href="#folder"/><path d="M3 9l3-3h5l-3 5H4z" fill="#5f92d0" stroke="#5f7fa8" stroke-width=".6"/></svg>Superficies</div></li>
                    <li><div class="row"><span class="twig"></span><svg viewBox="0 0 16 16"><use href="#folder"/><path d="M3 6l2-2h6v6l-3 2-4-1z" fill="#5f92d0" stroke="#345" stroke-width=".7"/><path d="M3 6h5l3-2M8 6v6" stroke="#246" stroke-width=".7" fill="none"/></svg>Sólidos</div></li>
                    <li><div class="row"><span class="twig"></span><svg viewBox="0 0 16 16"><use href="#folder"/><path d="M4.500 6h5.500v5H4.500z" fill="#f0dc70" stroke="#4a7fbc" stroke-width="2"/></svg>Huecos</div></li>
                    <li><div class="row"><span class="twig"></span><svg viewBox="0 0 16 16"><use href="#folder"/><path d="M4 13l1-3 1-2h2l1 2 1 3z" fill="#2f9a45"/><path d="M6 5h2v3H6z" fill="#d22"/></svg>Apoyos en nudos</div></li>
                    <li><div class="row"><span class="twig"><button aria-label="Expandir"></button></span><svg viewBox="0 0 16 16"><use href="#folder"/><path d="M3 7.500h8" stroke="#a22"/><path d="M2 6h2v3H2zM10 6h2v3h-2z" fill="#d22"/><path d="M3 12l2-3 2 3 2-3 2 3z" fill="#2f9a45"/></svg>Apoyos en línea</div></li>
                    <li><div class="row"><span class="twig"></span><svg viewBox="0 0 16 16"><use href="#folder"/><path d="M3 6l4-1 4 1-1 6H5z" fill="#2f8a55"/><path d="M4 6l3-1 3 1-3 2z" fill="#5f92d0" stroke="#246" stroke-width=".7"/></svg>Apoyos en superficie</div></li>
                    <li><div class="row"><span class="twig"></span><svg viewBox="0 0 16 16"><use href="#folder"/><path d="M3 11l3-4h2l-2 4zM7 10l2-3h3l-2 3z" fill="#d7dff0" stroke="#8893a8" stroke-width=".7"/></svg>Articulaciones lineales</div></li>
                    <li><div class="row"><span class="twig"></span><svg viewBox="0 0 16 16"><use href="#folder"/><path d="M3 9l8-3-2 4-5 1z" fill="#5f92d0" stroke="#345" stroke-width=".6"/></svg>Espesores variables</div></li>
                    <li><div class="row"><span class="twig"></span><svg viewBox="0 0 16 16"><use href="#folder"/><path d="M2 8l4-2 5 1-4 4z" fill="#5f92d0" stroke="#345" stroke-width=".6"/><path d="M5 8h4" stroke="#d22" stroke-width="1.500"/></svg>Superficies ortótropas y membranas</div></li>
                    <li><div class="row"><span class="twig"></span><svg viewBox="0 0 16 16"><use href="#folder"/><path d="M5 5l7-1-1 7-5 2z" fill="#5f82e0"/><path d="M2 5.500h4M2 12.500h4M4 5v8" stroke="#d22" stroke-width="1.500"/></svg>Secciones</div></li>
                    <li><div class="row"><span class="twig"></span><svg viewBox="0 0 16 16"><use href="#folder"/><path d="M3 8.500h8M2.500 6v5" stroke="#567"/><path d="M3 7h3v3H3z" fill="#c33"/></svg>Articulaciones en barras</div></li>
                    <li><div class="row"><span class="twig"></span><svg viewBox="0 0 16 16"><use href="#folder"/><path d="M3 11l5-6 3 2-5 5z" fill="#e2d080" stroke="#a66" stroke-width=".8"/><path d="M4 12l7-7" stroke="#667"/></svg>Excentricidades de barra</div></li>
                    <li><div class="row"><span class="twig"></span><svg viewBox="0 0 16 16"><use href="#folder"/><path d="M3 12l8-8M5 8l2 2M7 6l2 2" stroke="#345"/><path d="M2 11h2v2H2zM10 4h2v2h-2z" fill="#c44"/></svg>Divisiones de barra</div></li>
                    <li><div class="row"><span class="twig"></span><svg viewBox="0 0 16 16"><use href="#folder"/><path d="M3 12l8-7" stroke="#667" stroke-width="1.500"/><path d="M2 11h2v2H2zM10 4h2v2h-2z" fill="#b44"/></svg>Barras</div></li>
                    <li><div class="row"><span class="twig"></span><svg viewBox="0 0 16 16"><use href="#folder"/><path d="M3 8l4-2 4 1-3 3z" fill="#d7dbe8" stroke="#778" stroke-width=".7"/></svg>Nervios</div></li>
                    <li><div class="row"><span class="twig"></span><svg viewBox="0 0 16 16"><use href="#folder"/><path d="M2 7h3M9 7h3" stroke="#d22" stroke-width="2"/><path d="M4 8h1.500v3H4zM6.500 8H8v3H6.500zM9 8h1.500v3H9zM3 7h8v1H3z" fill="#276a3a"/></svg>Apoyos elásticos en barra</div></li>
                    <li><div class="row"><span class="twig"></span><svg viewBox="0 0 16 16"><use href="#folder"/><path d="M7 4v9" stroke="#b33" stroke-width="1.500" stroke-dasharray="2 1"/></svg>No linealidades de barra</div></li>
                    <li><div class="row"><span class="twig"></span><svg viewBox="0 0 16 16"><use href="#folder"/><path d="M3 12l4-5 4 5M4 6h7" stroke="#a22" fill="none"/><path d="M6 5h2v2H6zM2 11h2v2H2zM10 11h2v2h-2z" fill="#733"/></svg>Conjuntos de barras</div></li>
                    <li><div class="row"><span class="twig"></span><svg viewBox="0 0 16 16"><use href="#folder"/><path d="M3 8l4-4 4 4-4 4z" fill="#4a7fbc"/><path d="M4 7h6l-3 3z" fill="#d5e6f6"/></svg>Intersecciones de superficies</div></li>
                    <li><div class="row"><span class="twig"></span><svg viewBox="0 0 16 16"><use href="#folder"/><path d="M3.500 5.500h3v7M8.500 5.500h3v7h-3z" fill="#b9cbe2" stroke="#667"/><path d="M5 8v4" stroke="#345" stroke-width="1.500"/></svg>Refinamientos de malla de EF</div></li>
                    <li><div class="row"><span class="twig"></span><svg viewBox="0 0 16 16"><use href="#folder"/></svg>Liberaciones de nudos</div></li>
                    <li><div class="row"><span class="twig"></span><svg viewBox="0 0 16 16"><use href="#folder"/></svg>Tipos de liberaciones de líneas</div></li>
                    <li><div class="row"><span class="twig"></span><svg viewBox="0 0 16 16"><use href="#folder"/><path d="M3 11l3-4h2l-2 4zM7 10l2-3h3l-2 3z" fill="#d7dff0" stroke="#8893a8" stroke-width=".7"/></svg>Liberaciones de líneas</div></li>
                    <li><div class="row"><span class="twig"></span><svg viewBox="0 0 16 16"><use href="#folder"/><path d="M1 9l3-4h9l-1 3-3 3H2zM2 13h7l4-4" fill="#8cb8ea" stroke="#5b8ac4" stroke-width=".8"/></svg>Tipos de liberaciones de superficies</div></li>
                    <li><div class="row"><span class="twig"></span><svg viewBox="0 0 16 16"><use href="#folder"/><path d="M1 9l3-4h9l-1 3-3 3H2zM2 13h7l4-4" fill="#8cb8ea" stroke="#5b8ac4" stroke-width=".8"/></svg>Liberaciones de superficies</div></li>
                    <li><div class="row"><span class="twig"></span><svg viewBox="0 0 16 16"><use href="#folder"/></svg>Unión de dos barras</div></li>
                    <li><div class="row"><span class="twig"></span><svg viewBox="0 0 16 16"><use href="#folder"/></svg>Uniones</div></li>
                    <li><div class="row"><span class="twig"></span><svg viewBox="0 0 16 16"><use href="#folder"/><path d="M3 5l8 7M11 5l-8 7" stroke="#422"/><path d="M2 4h2v2H2zM10 4h2v2h-2zM2 11h2v2H2zM10 11h2v2h-2zM6 7h2v3H6z" fill="#d22"/></svg>Coacciones en nudo</div></li>
                  </ul>
                </li>
                <li><div class="row"><span class="twig"><button class="minus" aria-label="Contraer"></button></span><svg viewBox="0 0 16 16"><use href="#open"/></svg>Casos de carga y combinaciones</div>
                  <ul class="kids">
                    <li><div class="row"><span class="twig"><button aria-label="Expandir"></button></span><svg viewBox="0 0 18 18"><use href="#load" x="-1"/></svg>Casos de carga</div></li>
                    <li><div class="row"><span class="twig"><button aria-label="Expandir"></button></span><svg viewBox="0 0 17 17"><use href="#combo" x="-2"/><path d="M10 6h5v4h-5z" fill="#27b53d" stroke="#145c20" stroke-width=".7"/></svg>Combinaciones de carga</div></li>
                    <li><div class="row"><span class="twig"></span><svg viewBox="0 0 17 17"><use href="#combo" x="-2"/><path d="M10 6h5v4h-5z" fill="#4b96ee" stroke="#1d4a8c" stroke-width=".7"/></svg>Combinaciones de resultados</div></li>
                  </ul>
                </li>
                <li><div class="row"><span class="twig"><button aria-label="Expandir"></button></span><svg viewBox="0 0 16 16"><use href="#folder"/></svg>Cargas</div></li>
                <li><div class="row"><span class="twig"></span><svg viewBox="0 0 16 16"><use href="#folder"/></svg>Resultados</div></li>
                <li><div class="row"><span class="twig"></span><svg viewBox="0 0 16 16"><use href="#folder"/></svg>Secciones</div></li>
                <li><div class="row"><span class="twig"></span><svg viewBox="0 0 16 16"><use href="#folder"/></svg>Regiones medias</div></li>
                <li><div class="row"><span class="twig"></span><svg viewBox="0 0 16 16"><use href="#folder"/></svg>Informes</div></li>
                <li><div class="row"><span class="twig"><button aria-label="Expandir"></button></span><svg viewBox="0 0 16 16"><use href="#folder"/></svg>Objetos auxiliares</div></li>
              </ul>
            </li>
          </ul>
        </div>
        <div class="scroll vertical">
          <button aria-label="Subir"><svg viewBox="0 0 10 10"><path d="M1 7l4-4 4 4" fill="none" stroke="#505050" stroke-width="1.500"/></svg></button>
          <span class="track"><span class="thumb"></span></span>
          <button aria-label="Bajar"><svg viewBox="0 0 10 10"><path d="M1 3l4 4 4-4" fill="none" stroke="#505050" stroke-width="1.500"/></svg></button>
        </div>
        <div class="scroll horizontal">
          <button aria-label="Izquierda"><svg viewBox="0 0 10 10"><path d="M7 1L3 5l4 4" fill="none" stroke="#505050" stroke-width="1.500"/></svg></button>
          <span class="track"><span class="thumb"></span></span>
          <button aria-label="Derecha"><svg viewBox="0 0 10 10"><path d="M3 1l4 4-4 4" fill="none" stroke="#505050" stroke-width="1.500"/></svg></button>
        </div>
      </div>
      <div class="nav-tabs" role="tablist">
        <button role="tab" aria-selected="true"><svg viewBox="0 0 16 16"><path d="M3.500 1.500h12v11h-12z" fill="#fff" stroke="#5a86d0"/><path d="M3 3h13" stroke="#3f7ae0" stroke-width="3"/><path d="M.5 5.500h4l1 1h2v6h-7z" fill="#f0c62c" stroke="#8b701a"/><circle cx="10" cy="9" r="3.500" fill="#d7ebfa" stroke="#3f64a4" stroke-width="1.500"/><path d="M12 12l3 3" stroke="#34508c" stroke-width="2"/></svg>Datos</button>
        <button role="tab" aria-selected="false"><svg viewBox="0 0 16 16"><path d="M1.500 4.500h12v11h-12z" fill="#fff" stroke="#3a66b8"/><path d="M1 5h13" stroke="#3f7ae0" stroke-width="2"/><path d="M3 8.500h8M3 10.500h8M3 12.500h8" stroke="#3a66b8"/><path d="M5 4l4-3h5l2 3-3 3-4-1-4 1z" fill="#c59f80" stroke="#5d4839"/></svg>Mostrar</button>
        <button role="tab" aria-selected="false"><svg viewBox="0 0 16 16"><path d="M2 12l8-11 3 3-1 8z" fill="#6f97e6" stroke="#2745a0"/><path d="M8 3l4 3M6 7l5 3" stroke="#fff"/><path d="M1 14h13" stroke="#2745a0" stroke-width="2.500"/></svg>Vistas</button>
      </div>
    </aside>

    <section class="viewport" aria-label="Modelo">
      <p class="legend">CC2 : Desplazamiento<br>Cargas [mm]</p>
      <svg class="model" viewBox="312 109 953 854" preserveAspectRatio="xMinYMin meet">
        <path d="M515.500 185L1154.500 183V831.500L515.500 833.500z" fill="#eaeaea"/>
        <path d="M515.500 185L1154.500 183M1154.500 831.500L515.500 833.500" stroke="#2cfa3a" stroke-width="1.500" fill="none"/>
        <path d="M515.500 185V833" stroke="#30fb3c" stroke-width="1.500"/>
        <path d="M1154.500 183V831.500" stroke="#00ee10" stroke-width="1.500"/>
        <path d="M585 184.500h20M745 184h20M905 183.500h20M1065 183h20M585 833.500h20M745 833h20M905 832.500h20M1065 832h20" stroke="#18f024" stroke-width="2"/>
        <use href="#bearing-left"/><use href="#bearing-left" y="162"/><use href="#bearing-left" y="324"/><use href="#bearing-left" y="486"/>
        <use href="#bearing-right"/><use href="#bearing-right" y="162"/><use href="#bearing-right" y="324"/><use href="#bearing-right" y="487"/>
        <path d="M1157 183.500H1177.500V831.500H1155" fill="none" stroke="#9a3aa0" stroke-width="1.500" stroke-dasharray="8 3 2 3"/>
        <g stroke="#1c1c8c" fill="none">
          <path d="M424 184.500H511M424 833.500H510M428.500 186V487M428.500 531V832"/>
          <path d="M515.500 839V915M1154.500 838V913M517 910.500H814M857 909.500H1153"/>
        </g>
        <path d="M428.500 185l3 10h-6zM428.500 833l3-10h-6zM516 910.500l10-3v6zM1154 909.500l-10-3v6z" fill="#000078"/>
        <path d="M513 183h4v4h-4zM1152 181h4v4h-4zM513 832h4v4h-4zM1152 830h4v4h-4z" fill="#86100c"/>
        <text class="dim-text" x="835" y="914">1.000 m</text>
        <text class="dim-text" transform="translate(433 509) rotate(-90)">1.000 m</text>
        <text class="load-text" x="1149" y="176">0.0100</text>
        <text class="load-text" x="1149" y="825">0.0100</text>
      </svg>
    </section>
  </main>

  <footer class="statusbar">
    <div class="toggles"><button aria-pressed="false">FORZC</button><button aria-pressed="false">REJILLA</button><button aria-pressed="false">CARTES</button><button aria-pressed="false">REFENT</button><button aria-pressed="false">GLN</button><button aria-pressed="false">DXF</button></div>
    <span class="pane wide"></span><span class="pane x"></span><span class="pane"></span><span class="pane"></span><span class="pane last"><svg viewBox="0 0 12 12"><path d="M9 1h2v2H9zM5 5h2v2H5zM9 5h2v2H9zM1 9h2v2H1zM5 9h2v2H5zM9 9h2v2H9z" fill="#777"/></svg></span>
  </footer>
</div>
</body>
</html>
```
FILE: styles.css
```css
* { box-sizing: border-box; }
body { margin: 0; font: 11px/18px "Noto Sans", "Open Sans", sans-serif; color: #000; }
button { margin: 0; padding: 0; border: 0; background: none; font: inherit; color: inherit; }
h1, h2, p, ul { margin: 0; padding: 0; font-weight: 400; font-size: 11px; }
ul { list-style: none; }
svg { display: block; flex: none; }
.defs { position: absolute; }

.window { display: flex; flex-direction: column; height: 100vh; border: 1px solid #6b6b6f; background: #d0d5e0; overflow: hidden; }

.titlebar { display: flex; align-items: center; flex: none; height: 30px; padding-left: 8px; background: #fff; }
.titlebar .ico { width: 16px; height: 16px; margin-right: 5px; }
.titlebar h1 { flex: 1; }
.caption-buttons { display: flex; }
.caption-buttons button { width: 46px; height: 30px; display: grid; place-items: center; }
.caption-buttons svg { width: 12px; height: 12px; }

.menubar { display: flex; align-items: center; flex: none; height: 24px; color: #4b505c; background: #d0d4de; }
.menubar .brand { width: 16px; height: 15px; margin-right: 3px; }
.menubar > button { padding: 0 7px; white-space: nowrap; }
.mdi-buttons { display: flex; margin-left: auto; gap: 4px; padding: 4px 3px 0 0; }
.mdi-buttons svg { width: 12px; height: 12px; }

.toolbar { display: flex; align-items: center; flex: none; height: 26px; overflow: hidden; background: linear-gradient(#eef1f7, #e2e6ef 50%, #d5dae6); border-bottom: 1px solid #bcc3d2; }
.grip { flex: none; width: 12px; height: 16px; background: linear-gradient(#a3aaba 2px, transparent 2px) 7px 1px / 2px 4px repeat-y; }
.grip:first-child { width: 10px; background-position-x: 4px; }
.sep { flex: none; width: 8px; height: 16px; background: linear-gradient(#a3aabb, #a3aabb) 4px 0 / 1px 100% no-repeat; }
.tool { display: grid; place-items: center; flex: none; width: 22px; height: 22px; }
.tool svg, .split svg { width: 18px; height: 18px; }
.tool.on { border: 1px solid #b5853a; border-radius: 1px; background: linear-gradient(#fbc780, #fdb04a 45%, #ffe59a); }
.tool.on svg { width: 18px; height: 18px; }
.dim svg { opacity: .6; }
.split { display: flex; align-items: center; flex: none; width: 35px; padding-left: 4px; gap: 4px; }
.more { width: 6px; height: 3px; background: #858b99; clip-path: polygon(0 0, 100% 0, 50% 100%); }
.combo { display: grid; flex: none; width: 216px; margin: 0 2px; }
.combo > * { grid-area: 1 / 1; }
.combo select { appearance: none; width: 100%; height: 20px; padding: 0 3px; border: 0; border-radius: 0; background: #fff; color: #000; font: 11px/18px "Open Sans", sans-serif; }
.combo svg { width: 14px; height: 18px; justify-self: end; align-self: center; pointer-events: none; }

.workspace { display: flex; flex: 1; min-height: 0; gap: 5px; }
.navigator { display: flex; flex-direction: column; flex: 0 0 305px; border-right: 1px solid #9ba3b2; }
.nav-title { display: flex; align-items: center; flex: none; height: 20px; padding: 0 4px; margin-bottom: 1px; gap: 4px; background: #b9c1cd; color: #3f444d; }
.nav-title h2 { flex: 1; }
.nav-title svg { width: 12px; height: 12px; }
.nav-frame { display: grid; grid-template: minmax(0, 1fr) 15px / minmax(0, 1fr) 15px; flex: 1; min-height: 0; margin: 2px 3px; border: 1px solid #8d95a6; padding-bottom: 2px; background: #fbfbf5; }
.tree { overflow: hidden; padding-left: 2px; white-space: nowrap; }
.tree svg { width: 16px; height: 16px; margin: 0 3px; overflow: visible; }
.root { display: flex; align-items: center; height: 18px; }
.tree .root svg { margin: 0 5px 0 1px; }
.row { display: flex; align-items: center; height: 18px; }
.project { font-weight: 700; }
.kids .kids { margin-left: 19px; }
.kids li { background: repeating-linear-gradient(#8c8c88 0 1px, transparent 1px 2px) 9px 0 / 1px 100% no-repeat; }
.kids li:last-child { background-size: 1px 9px; }
.twig { flex: none; width: 19px; height: 9px; background: repeating-linear-gradient(90deg, #8c8c88 0 1px, transparent 1px 2px) 10px 4px / 12px 1px no-repeat; }
.twig button { display: block; width: 9px; height: 9px; margin-left: 5px; border: 1px solid #8f8f8f; background: linear-gradient(#33509c, #33509c) center / 5px 1px no-repeat, linear-gradient(#33509c, #33509c) center / 1px 5px no-repeat, #fafafa; }
.twig .minus { background: linear-gradient(#33509c, #33509c) center / 5px 1px no-repeat, #fafafa; }

.scroll { display: flex; background: #f0f0ef; }
.scroll button { display: grid; place-items: center; flex: none; width: 17px; height: 17px; }
.scroll svg { width: 10px; height: 10px; }
.track { display: flex; flex: 1; }
.thumb { background: #cdcdcd; }
.vertical { flex-direction: column; }
.vertical button { width: 15px; }
.vertical .track { flex-direction: column; }
.vertical .thumb { height: 36%; }
.horizontal button { height: 15px; }
.horizontal .thumb { width: 43%; }

.nav-tabs { display: flex; flex: none; height: 23px; padding: 0 5px 4px; gap: 6px; border-top: 1px solid #8d95a6; color: #50555f; }
.nav-tabs button { display: flex; align-items: center; gap: 2px; padding: 0 4px 0 2px; }
.nav-tabs svg { width: 16px; height: 16px; }
.nav-tabs [aria-selected="true"] { padding: 0 3px 0 1px; background: #f1f3f6; border: solid #b5dcdc; border-width: 0 1px 1px 0; }

.viewport { position: relative; flex: 1; min-width: 0; margin-top: 1px; border: 1px solid #6f747e; border-right: 2px solid #dcdfe4; border-bottom-color: #dcdfe4; background: #fcfcfc; }
.legend { position: absolute; left: 5px; top: 5px; font: 11px/14px "Liberation Sans", Arial, sans-serif; }
.model { width: 100%; height: 100%; }
.dim-text { font: bold 10px "Liberation Sans", Arial, sans-serif; fill: #000078; text-anchor: middle; }
.load-text { font: 9px "Liberation Sans", Arial, sans-serif; fill: #8a1290; text-anchor: middle; }

.statusbar { display: flex; flex: none; height: 21px; border-top: 1px solid #a3a8b0; background: linear-gradient(#e4e6ec, #cfd3dc 35%, #adb2bc 50%, #b6bac3 85%, #a4a9b2); }
.toggles { display: flex; gap: 2px; margin-left: auto; padding-top: 1px; }
.toggles button { height: 18px; padding: 0 1px; border: 1px solid #e8eaee; border-top: 1px solid #111; border-left: 2px solid #111; font: 11px/15px "Liberation Sans", Arial, sans-serif; color: #2c3038; }
.pane { flex: none; width: 74px; margin: 2px 0; border-left: 1px solid #9a9c9e; }
.pane.wide { width: 191px; border-left: 0; }
.pane.x { width: 88px; }
.pane.last { display: flex; align-items: flex-end; justify-content: flex-end; width: 91px; }
.pane svg { width: 12px; height: 12px; }
```
